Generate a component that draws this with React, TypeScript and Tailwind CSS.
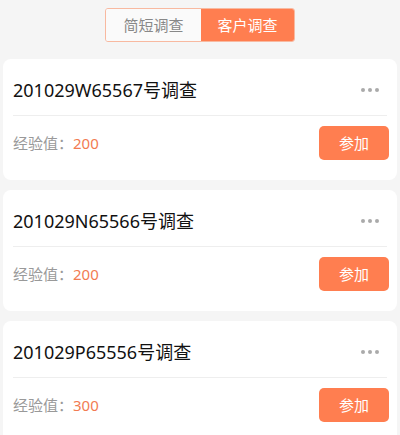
import React from "react";

const items = [
  { title: "201029W65567号调查", exp: "200" },
  { title: "201029N65566号调查", exp: "200" },
  { title: "201029P65556号调查", exp: "300" },
];

export default function App() {
  return (
    <div
      className="w-[400px] h-[435px] overflow-hidden bg-[#f5f5f5] flex flex-col"
      style={{ fontFamily: '"Noto Sans", "Noto Sans CJK SC", sans-serif' }}
    >
      <div className="flex justify-center pt-[8px] pb-[17px]">
        <div className="flex h-[34px] border border-[#f8b9a0] rounded-[3px] overflow-hidden">
          <div className="w-[95px] flex items-center justify-center bg-[#fafafa] text-[#888] text-[15px]">
            简短调查
          </div>
          <div className="w-[93px] flex items-center justify-center bg-[#ff7e50] text-white text-[15px]">
            客户调查
          </div>
        </div>
      </div>
      <div className="flex flex-col gap-[10px] px-[3px]">
        {items.map((it) => (
          <div key={it.title} className="bg-white rounded-[8px] px-[10px] shrink-0">
            <div className="h-[56px] pt-[6px] flex items-center justify-between">
              <span className="text-[18px] text-[#111] leading-none">{it.title}</span>
              <div className="flex gap-[3px] mr-[8px]">
                <span className="w-[4px] h-[4px] rounded-full bg-[#aaa]" />
                <span className="w-[4px] h-[4px] rounded-full bg-[#aaa]" />
                <span className="w-[4px] h-[4px] rounded-full bg-[#aaa]" />
              </div>
            </div>
            <div className="h-px bg-[#eeeeee]" />
            <div className="pt-[10px] pb-[20px] flex items-center justify-between">
              <div className="text-[15px] leading-none">
                <span className="text-[#999]">经验值：</span>
                <span className="text-[#f27b52]">{it.exp}</span>
              </div>
              <button className="w-[70px] h-[34px] rounded-[5px] bg-[#ff7e50] text-white text-[15px] mr-[-2px]">
                参加
              </button>
            </div>
          </div>
        ))}
      </div>
    </div>
  );
}
